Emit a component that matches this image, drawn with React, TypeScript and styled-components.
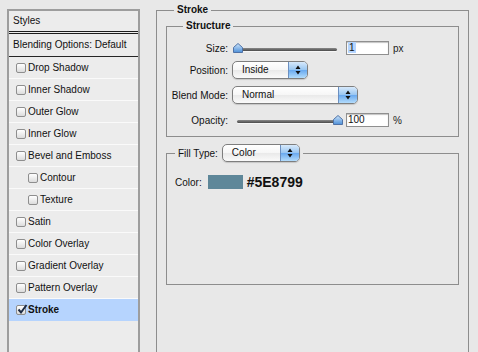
import styled, { createGlobalStyle } from "styled-components";

const GlobalStyle = createGlobalStyle`
  html, body {
    margin: 0;
    padding: 0;
  }
  body {
    background: #e8e8e8;
    font-family: "Liberation Sans", Arial, sans-serif;
    font-size: 10px;
    color: #111;
    overflow: hidden;
  }
`;

const Window = styled.div`
  display: flex;
  align-items: flex-start;
  gap: 16px;
  height: 352px;
  padding-left: 7px;
  overflow: hidden;
`;

const StylesPanel = styled.div`
  width: 129px;
  height: 400px;
  margin-top: 9px;
  border: 2px solid #9d9d9d;
  border-bottom: none;
  background: #ececec;
  display: flex;
  flex-direction: column;
`;

const PanelHeader = styled.div`
  height: 20px;
  line-height: 20px;
  padding-left: 4px;
  border-bottom: 3px double #1c1c1c;
`;

const BlendingRow = styled.div`
  height: 22px;
  line-height: 22px;
  padding-left: 4px;
  border-bottom: 1px solid #262626;
`;

const StyleItem = styled.div<{ $indent?: boolean; $selected?: boolean }>`
  height: 21px;
  display: flex;
  align-items: center;
  gap: 2px;
  padding-left: ${(p) => (p.$indent ? 19 : 7)}px;
  border-bottom: 1px solid ${(p) => (p.$selected ? "#b6d4fe" : "#fafafa")};
  background: ${(p) => (p.$selected ? "#b6d4fe" : "transparent")};
  font-weight: ${(p) => (p.$selected ? "bold" : "normal")};
`;

const Box = styled.span`
  position: relative;
  width: 8px;
  height: 8px;
  border: 1px solid #8e8e8e;
  border-radius: 2px;
  background: linear-gradient(#ffffff, #dcdcdc);
  flex-shrink: 0;
  svg {
    position: absolute;
    left: 0;
    top: -2px;
  }
`;

const Group = styled.fieldset`
  margin: 0;
  padding: 0 9px;
  min-width: 0;
  border: 1px solid #8d8d8d;
`;

const StrokeGroup = styled(Group)`
  width: 293px;
  height: 400px;
  margin-top: 4px;
`;

const InnerGroup = styled(Group)<{ $gap?: number }>`
  padding: 0 3px 5px;
  margin-top: ${(p) => p.$gap ?? 0}px;
`;

const Legend = styled.legend<{ $offset: number }>`
  margin-left: ${(p) => p.$offset}px;
  padding: 0 3px;
  line-height: 12px;
  font-weight: bold;
`;

const FillLegend = styled.legend`
  margin-left: 5px;
  padding: 0 3px;
  display: flex;
  align-items: center;
  gap: 4px;
`;

const FieldRow = styled.div<{ $gap?: number }>`
  display: flex;
  align-items: center;
  height: 22px;
  margin-top: ${(p) => p.$gap ?? 0}px;
`;

const Label = styled.span`
  width: 58px;
  margin-right: 4px;
  text-align: right;
  flex-shrink: 0;
`;

const SliderWrap = styled.div`
  position: relative;
  width: 110px;
  height: 10px;
  margin-right: 4px;
`;

const Track = styled.div`
  position: absolute;
  left: 5px;
  right: 5px;
  top: 5px;
  height: 3px;
  border-radius: 2px;
  background: linear-gradient(#8a8a8a, #4a4a4a);
  box-shadow: 0 1px 0 #f6f6f6;
`;

const Thumb = styled.svg`
  position: absolute;
  top: 0;
`;

const NumberInput = styled.div`
  width: 39px;
  height: 12px;
  line-height: 12px;
  padding: 0 1px;
  border: 1px solid #8f8f8f;
  box-shadow: inset 0 1px 1px #c4c4c4;
  background: #fff;
  margin-right: 4px;
`;

const Highlight = styled.span`
  background: #b5d5ff;
  padding: 0 1px;
`;

const SelectBox = styled.div<{ $width: number }>`
  width: ${(p) => p.$width}px;
  height: 16px;
  box-sizing: content-box;
  display: flex;
  align-items: stretch;
  border: 1px solid #7e7e7e;
  border-radius: 5px;
  overflow: hidden;
  background: linear-gradient(#ffffff, #f6f6f6 50%, #e9e9e9 51%, #fafafa);
  box-shadow: 0 1px 1px rgba(0, 0, 0, 0.15);
`;

const SelectText = styled.span`
  flex: 1;
  padding-left: 9px;
  line-height: 16px;
`;

const SelectArrows = styled.span`
  width: 18px;
  display: flex;
  align-items: center;
  justify-content: center;
  border-left: 1px solid #6b8fc0;
  background: linear-gradient(#d7e9fb, #9ac7f2 48%, #6aaaf0 52%, #b3dcfb);
`;

const ColorRow = styled.div`
  display: flex;
  align-items: center;
  gap: 4px;
  height: 18px;
  margin: 11px 0 88px 5px;
`;

const Swatch = styled.span<{ $color: string }>`
  width: 35px;
  height: 14px;
  margin-left: 2px;
  background: ${(p) => p.$color};
`;

const HexValue = styled.span`
  font-size: 14px;
  font-weight: bold;
`;

const Unit = styled.span`
  color: #222;
`;

type Item = { name: string; indent?: boolean; checked?: boolean };

const items: Item[] = [
  { name: "Drop Shadow" },
  { name: "Inner Shadow" },
  { name: "Outer Glow" },
  { name: "Inner Glow" },
  { name: "Bevel and Emboss" },
  { name: "Contour", indent: true },
  { name: "Texture", indent: true },
  { name: "Satin" },
  { name: "Color Overlay" },
  { name: "Gradient Overlay" },
  { name: "Pattern Overlay" },
  { name: "Stroke", checked: true },
];

const Checkbox = ({ checked }: { checked?: boolean }) => (
  <Box>
    {checked && (
      <svg width="11" height="11" viewBox="0 0 11 11">
        <path d="M1.5 5.5 L4 8.5 L9.5 1" fill="none" stroke="#1b2a44" strokeWidth="2" />
      </svg>
    )}
  </Box>
);

const Slider = ({ value }: { value: number }) => (
  <SliderWrap>
    <Track />
    <Thumb width="10" height="10" viewBox="0 0 10 10" style={{ left: 1 + value * 100 }}>
      <defs>
        <linearGradient id="thumbFill" x1="0" y1="0" x2="0" y2="1">
          <stop offset="0" stopColor="#cfe6fb" />
          <stop offset="1" stopColor="#4d8fd8" />
        </linearGradient>
      </defs>
      <path d="M0.5 4.5 L5 0.5 L9.5 4.5 V9.5 H0.5 Z" fill="url(#thumbFill)" stroke="#4f72a6" />
    </Thumb>
  </SliderWrap>
);

const Select = ({ value, width }: { value: string; width: number }) => (
  <SelectBox $width={width}>
    <SelectText>{value}</SelectText>
    <SelectArrows>
      <svg width="6" height="10" viewBox="0 0 6 10">
        <path d="M3 0.5 L5.5 4 H0.5 Z M3 9.5 L5.5 6 H0.5 Z" fill="#111" />
      </svg>
    </SelectArrows>
  </SelectBox>
);

export default function App() {
  return (
    <>
      <GlobalStyle />
      <Window>
        <StylesPanel>
          <PanelHeader>Styles</PanelHeader>
          <BlendingRow>Blending Options: Default</BlendingRow>
          {items.map((item) => (
            <StyleItem key={item.name} $indent={item.indent} $selected={item.checked}>
              <Checkbox checked={item.checked} />
              {item.name}
            </StyleItem>
          ))}
        </StylesPanel>

        <StrokeGroup>
          <Legend $offset={8}>Stroke</Legend>
          <InnerGroup $gap={4}>
            <Legend $offset={13}>Structure</Legend>
            <FieldRow style={{ marginTop: 5 }}>
              <Label>Size:</Label>
              <Slider value={0} />
              <NumberInput>
                <Highlight>1</Highlight>
              </NumberInput>
              <Unit>px</Unit>
            </FieldRow>
            <FieldRow>
              <Label>Position:</Label>
              <Select value="Inside" width={74} />
            </FieldRow>
            <FieldRow $gap={3}>
              <Label>Blend Mode:</Label>
              <Select value="Normal" width={124} />
            </FieldRow>
            <FieldRow $gap={3}>
              <Label>Opacity:</Label>
              <Slider value={1} />
              <NumberInput>100</NumberInput>
              <Unit>%</Unit>
            </FieldRow>
          </InnerGroup>

          <InnerGroup $gap={7}>
            <FillLegend>
              Fill Type:
              <Select value="Color" width={76} />
            </FillLegend>
            <ColorRow>
              Color:
              <Swatch $color="#5E8799" />
              <HexValue>#5E8799</HexValue>
            </ColorRow>
          </InnerGroup>
        </StrokeGroup>
      </Window>
    </>
  );
}
